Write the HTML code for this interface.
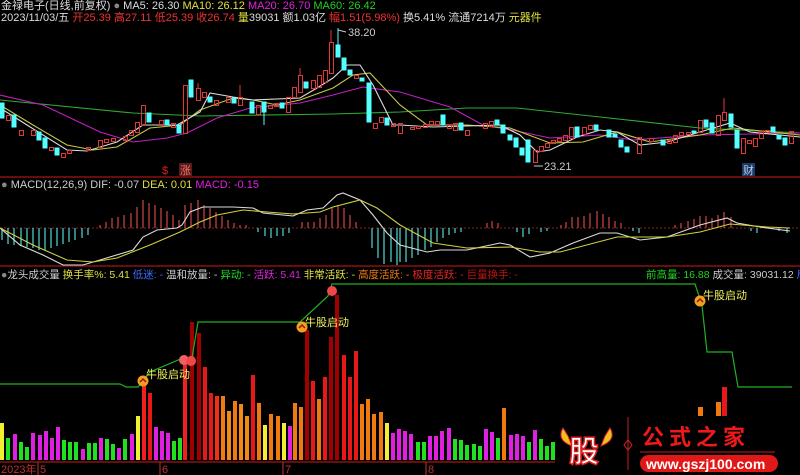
<!DOCTYPE html>
<html><head><meta charset="utf-8"><style>
body{margin:0;background:#000;width:800px;height:475px;overflow:hidden;position:relative;font-family:"Liberation Sans","Noto Sans CJK SC",sans-serif;font-size:11px;}
.t{position:absolute;white-space:nowrap;line-height:12px;}
svg{position:absolute;left:0;top:0}
</style></head><body>
<svg width="800" height="475" viewBox="0 0 800 475">
<line x1="0" y1="177" x2="800" y2="177" stroke="#8a1010" stroke-width="1.5"/>
<line x1="0" y1="266" x2="800" y2="266" stroke="#8a1010" stroke-width="1.5"/>
<line x1="0" y1="462" x2="555" y2="462" stroke="#8a1010" stroke-width="1.5"/>
<line x1="0" y1="228" x2="800" y2="228" stroke="#8a2020" stroke-dasharray="2,2"/>
<g fill="none" stroke-width="1.1">
<polyline stroke="#2faa2f" points="0,100 133,113 200,116 333,114 400,112 467,108 517,108 600,117 700,128 800,133"/>
<polyline stroke="#c020c0" points="0,95 43,105 100,132 133,142 167,138 187,133 217,118 250,108 300,103 333,95 363,87 400,92 450,107 483,125 517,131 550,138 600,135 633,140 700,135 800,133"/>
<polyline stroke="#c8c840" points="0,105 33,125 67,145 93,150 117,147 150,128 180,125 200,110 233,98 253,100 277,105 300,100 333,88 353,75 370,73 400,105 427,125 467,125 510,128 550,143 583,142 617,132 650,142 700,135 733,128 800,135"/>
<polyline stroke="#ddd" points="0,108 27,125 67,150 87,151 117,142 143,125 177,125 200,112 210,93 233,97 253,100 300,98 317,88 333,78 347,65 360,65 373,85 393,125 400,125 433,127 500,125 520,135 537,152 550,150 577,137 600,130 617,132 640,145 667,142 700,132 730,123 750,132 800,137"/>
</g>
<g stroke-width="1">
<g fill="#54ffff" stroke="#54ffff">
<rect x="0" y="103" width="4" height="15"/><rect x="12" y="115" width="4" height="12"/><rect x="37" y="132" width="4" height="8"/><rect x="43" y="138" width="4" height="10"/><rect x="55" y="148" width="4" height="7"/><rect x="147" y="113" width="4" height="9"/><rect x="165" y="120" width="4" height="5"/><rect x="177" y="125" width="4" height="8"/><rect x="189" y="80" width="4" height="17"/><rect x="208" y="97" width="4" height="5"/><rect x="232" y="98" width="4" height="5"/><rect x="250" y="102" width="4" height="11"/><rect x="262" y="102" width="4" height="10"/><line x1="264" y1="112" x2="264" y2="125"/><rect x="280" y="103" width="4" height="5"/><rect x="304" y="82" width="4" height="6"/><rect x="336" y="45" width="4" height="12"/><line x1="338" y1="28" x2="338" y2="45"/><rect x="342" y="58" width="4" height="12"/><rect x="348" y="70" width="4" height="5"/><rect x="360" y="78" width="4" height="3"/><rect x="367" y="83" width="4" height="39"/><rect x="385" y="118" width="4" height="7"/>
<rect x="441" y="115" width="4" height="10"/><rect x="459" y="123" width="4" height="7"/><rect x="495" y="120" width="4" height="5"/><rect x="501" y="125" width="4" height="8"/><rect x="508" y="135" width="4" height="5"/><rect x="514" y="138" width="4" height="9"/><rect x="520" y="148" width="4" height="7"/><rect x="526" y="140" width="4" height="22"/><rect x="575" y="127" width="4" height="10"/><rect x="594" y="125" width="4" height="5"/><rect x="607" y="130" width="4" height="7"/><rect x="613" y="134" width="4" height="3"/><rect x="619" y="140" width="4" height="7"/><rect x="625" y="147" width="4" height="5"/><rect x="661" y="140" width="4" height="5"/><rect x="692" y="131" width="4" height="2"/><rect x="704" y="120" width="4" height="7"/><rect x="710" y="123" width="4" height="10"/><rect x="729" y="114" width="4" height="13"/><rect x="735" y="130" width="4" height="18"/><rect x="771" y="127" width="4" height="5"/><rect x="777" y="135" width="4" height="4"/><rect x="783" y="138" width="4" height="7"/>
</g>
<g fill="none" stroke="#e03838">
<rect x="6.5" y="115.5" width="4" height="5"/><rect x="19.5" y="130.5" width="4" height="5"/><rect x="31.5" y="130.5" width="4" height="5"/><rect x="49.5" y="147.5" width="4" height="3"/><rect x="61.5" y="153.5" width="4" height="4"/><rect x="67.5" y="150.5" width="4" height="3"/><rect x="86.5" y="147.5" width="4" height="3"/><rect x="98.5" y="140.5" width="4" height="7"/><rect x="104.5" y="139.5" width="4" height="3"/><rect x="111.5" y="138.5" width="4" height="3"/><rect x="123.5" y="136.5" width="4" height="4"/><rect x="129.5" y="130.5" width="4" height="5"/><rect x="135.5" y="122.5" width="4" height="10"/><rect x="141.5" y="105.5" width="4" height="20"/><rect x="159.5" y="120.5" width="4" height="5"/><rect x="171.5" y="123.5" width="4" height="4"/><rect x="183.5" y="85.5" width="4" height="48"/><rect x="196.5" y="88.5" width="4" height="12"/><line x1="198" y1="83" x2="198" y2="88"/><rect x="202.5" y="92.5" width="4" height="5"/><rect x="214.5" y="100.5" width="4" height="5"/><rect x="226.5" y="97.5" width="4" height="5"/><rect x="238.5" y="97.5" width="4" height="8"/><line x1="240" y1="85" x2="240" y2="97"/><rect x="256.5" y="105.5" width="4" height="9"/><rect x="268.5" y="105.5" width="4" height="3"/><rect x="274.5" y="103.5" width="4" height="3"/><rect x="286.5" y="97.5" width="4" height="15"/><rect x="292.5" y="87.5" width="4" height="10"/><rect x="298.5" y="75.5" width="4" height="17"/><line x1="300" y1="68" x2="300" y2="75"/><rect x="311.5" y="80.5" width="4" height="8"/><rect x="317.5" y="75.5" width="4" height="12"/><rect x="323.5" y="70.5" width="4" height="12"/><rect x="329.5" y="42.5" width="4" height="31"/><line x1="331" y1="30" x2="331" y2="42"/><rect x="354.5" y="75.5" width="4" height="3"/><rect x="373.5" y="123.5" width="4" height="5"/><rect x="379.5" y="117.5" width="4" height="5"/><rect x="391.5" y="123.5" width="4" height="3"/>
<rect x="398.5" y="123.5" width="4" height="10"/><rect x="410.5" y="127.5" width="4" height="2"/><rect x="416.5" y="126.5" width="4" height="2"/><rect x="423.5" y="124.5" width="4" height="3"/><rect x="429.5" y="121.5" width="4" height="4"/><rect x="435.5" y="121.5" width="4" height="4"/><rect x="447.5" y="125.5" width="4" height="3"/><rect x="453.5" y="123.5" width="4" height="7"/><rect x="465.5" y="130.5" width="4" height="5"/><rect x="483.5" y="123.5" width="4" height="5"/><rect x="489.5" y="121.5" width="4" height="5"/><rect x="533.5" y="150.5" width="4" height="12"/><rect x="539.5" y="146.5" width="4" height="5"/><rect x="545.5" y="143.5" width="4" height="4"/><rect x="551.5" y="140.5" width="4" height="3"/><rect x="557.5" y="138.5" width="4" height="3"/><rect x="563.5" y="135.5" width="4" height="5"/><rect x="569.5" y="127.5" width="4" height="11"/><rect x="582.5" y="127.5" width="4" height="7"/><rect x="588.5" y="125.5" width="4" height="4"/><rect x="637.5" y="137.5" width="4" height="16"/><rect x="649.5" y="138.5" width="4" height="3"/><rect x="667.5" y="140.5" width="4" height="3"/><rect x="673.5" y="135.5" width="4" height="7"/><rect x="679.5" y="132.5" width="4" height="3"/><rect x="686.5" y="132.5" width="4" height="2"/><rect x="698.5" y="120.5" width="4" height="12"/><rect x="716.5" y="115.5" width="4" height="20"/><rect x="722.5" y="112.5" width="4" height="8"/><line x1="724" y1="98" x2="724" y2="112"/><rect x="741.5" y="138.5" width="4" height="15"/><rect x="747.5" y="140.5" width="4" height="3"/><rect x="753.5" y="138.5" width="4" height="8"/><rect x="759.5" y="131.5" width="4" height="7"/><rect x="765.5" y="130.5" width="4" height="2"/><rect x="789.5" y="131.5" width="4" height="12"/>
</g>
</g>
<g font-size="11" fill="#ccc"><text x="348" y="36">38.20</text><line x1="338" y1="30" x2="346" y2="32" stroke="#ccc"/><text x="544" y="170">23.21</text><line x1="534" y1="166" x2="543" y2="166" stroke="#ccc"/></g>
<text x="162" y="174" font-size="11" fill="#e02020">$</text>
<rect x="179" y="163" width="13" height="13" fill="#5a1a1a"/><text x="180" y="174" font-size="11" fill="#f07070">涨</text>
<rect x="742" y="163" width="13" height="13" fill="#1a3a6a"/><text x="743" y="174" font-size="11" fill="#bcd">财</text>
<g stroke-width="1.3">
<g stroke="#4fc8c8">
<line x1="2" y1="228" x2="2" y2="240"/><line x1="8" y1="228" x2="8" y2="244"/><line x1="14" y1="228" x2="14" y2="245"/><line x1="21" y1="228" x2="21" y2="246"/><line x1="27" y1="228" x2="27" y2="247"/><line x1="33" y1="228" x2="33" y2="248"/><line x1="39" y1="228" x2="39" y2="250"/><line x1="45" y1="228" x2="45" y2="250"/><line x1="51" y1="228" x2="51" y2="248"/><line x1="57" y1="228" x2="57" y2="246"/><line x1="63" y1="228" x2="63" y2="244"/><line x1="69" y1="228" x2="69" y2="242"/><line x1="75" y1="228" x2="75" y2="240"/><line x1="82" y1="228" x2="82" y2="238"/><line x1="88" y1="228" x2="88" y2="235"/>
<line x1="258" y1="228" x2="258" y2="232"/><line x1="265" y1="228" x2="265" y2="236"/><line x1="271" y1="228" x2="271" y2="238"/><line x1="277" y1="228" x2="277" y2="236"/><line x1="283" y1="228" x2="283" y2="236"/><line x1="289" y1="228" x2="289" y2="233"/>
<line x1="372" y1="228" x2="372" y2="248"/><line x1="378" y1="228" x2="378" y2="258"/><line x1="384" y1="228" x2="384" y2="264"/><line x1="391" y1="228" x2="391" y2="262"/><line x1="397" y1="228" x2="397" y2="265"/><line x1="400" y1="228" x2="400" y2="262"/><line x1="406" y1="228" x2="406" y2="262"/><line x1="412" y1="228" x2="412" y2="258"/><line x1="418" y1="228" x2="418" y2="255"/><line x1="425" y1="228" x2="425" y2="250"/><line x1="431" y1="228" x2="431" y2="247"/><line x1="437" y1="228" x2="437" y2="242"/><line x1="443" y1="228" x2="443" y2="238"/><line x1="449" y1="228" x2="449" y2="235"/><line x1="455" y1="228" x2="455" y2="233"/><line x1="461" y1="228" x2="461" y2="232"/>
<line x1="517" y1="228" x2="517" y2="232"/><line x1="523" y1="228" x2="523" y2="237"/><line x1="529" y1="228" x2="529" y2="234"/><line x1="541" y1="228" x2="541" y2="232"/><line x1="547" y1="228" x2="547" y2="231"/><line x1="633" y1="228" x2="633" y2="231"/><line x1="639" y1="228" x2="639" y2="233"/><line x1="751" y1="228" x2="751" y2="231"/><line x1="757" y1="228" x2="757" y2="233"/><line x1="779" y1="228" x2="779" y2="231"/><line x1="787" y1="228" x2="787" y2="233"/>
</g>
<g stroke="#c04040">
<line x1="100" y1="228" x2="100" y2="225"/><line x1="106" y1="228" x2="106" y2="222"/><line x1="112" y1="228" x2="112" y2="218"/><line x1="118" y1="228" x2="118" y2="217"/><line x1="124" y1="228" x2="124" y2="215"/><line x1="131" y1="228" x2="131" y2="213"/><line x1="137" y1="228" x2="137" y2="207"/><line x1="143" y1="228" x2="143" y2="200"/><line x1="149" y1="228" x2="149" y2="203"/><line x1="155" y1="228" x2="155" y2="205"/><line x1="161" y1="228" x2="161" y2="208"/><line x1="167" y1="228" x2="167" y2="211"/><line x1="173" y1="228" x2="173" y2="215"/><line x1="179" y1="228" x2="179" y2="220"/><line x1="185" y1="228" x2="185" y2="205"/><line x1="191" y1="228" x2="191" y2="203"/><line x1="198" y1="228" x2="198" y2="200"/><line x1="204" y1="228" x2="204" y2="205"/><line x1="210" y1="228" x2="210" y2="208"/><line x1="216" y1="228" x2="216" y2="212"/><line x1="222" y1="228" x2="222" y2="216"/><line x1="228" y1="228" x2="228" y2="220"/><line x1="234" y1="228" x2="234" y2="223"/><line x1="240" y1="228" x2="240" y2="225"/><line x1="246" y1="228" x2="246" y2="225"/>
<line x1="302" y1="228" x2="302" y2="222"/><line x1="308" y1="228" x2="308" y2="222"/><line x1="314" y1="228" x2="314" y2="222"/><line x1="320" y1="228" x2="320" y2="218"/><line x1="326" y1="228" x2="326" y2="215"/><line x1="332" y1="228" x2="332" y2="208"/><line x1="338" y1="228" x2="338" y2="205"/><line x1="344" y1="228" x2="344" y2="208"/><line x1="350" y1="228" x2="350" y2="215"/><line x1="356" y1="228" x2="356" y2="222"/>
<line x1="487" y1="228" x2="487" y2="223"/><line x1="492" y1="228" x2="492" y2="221"/><line x1="498" y1="228" x2="498" y2="223"/><line x1="561" y1="228" x2="561" y2="225"/><line x1="566" y1="228" x2="566" y2="222"/><line x1="572" y1="228" x2="572" y2="217"/><line x1="578" y1="228" x2="578" y2="217"/><line x1="584" y1="228" x2="584" y2="216"/><line x1="590" y1="228" x2="590" y2="213"/><line x1="597" y1="228" x2="597" y2="211"/><line x1="603" y1="228" x2="603" y2="214"/><line x1="609" y1="228" x2="609" y2="217"/><line x1="615" y1="228" x2="615" y2="221"/><line x1="621" y1="228" x2="621" y2="223"/>
<line x1="675" y1="228" x2="675" y2="225"/><line x1="681" y1="228" x2="681" y2="223"/><line x1="688" y1="228" x2="688" y2="221"/><line x1="694" y1="228" x2="694" y2="219"/><line x1="700" y1="228" x2="700" y2="216"/><line x1="706" y1="228" x2="706" y2="216"/><line x1="712" y1="228" x2="712" y2="218"/><line x1="718" y1="228" x2="718" y2="215"/><line x1="724" y1="228" x2="724" y2="212"/><line x1="731" y1="228" x2="731" y2="217"/>
</g>
</g>
<g fill="none" stroke-width="1.1">
<polyline stroke="#ddd" points="0,228 20,245 43,255 63,265 83,265 100,260 133,250 143,237 157,230 177,228 182,225 190,212 203,207 233,207 253,208 263,213 293,216 307,210 323,208 337,195 343,193 360,200 373,215 387,233 400,245 427,252 440,250 467,250 500,243 510,245 530,257 550,253 573,243 600,233 617,233 640,240 667,237 700,225 727,218 737,223 760,227 790,231"/>
<polyline stroke="#d0d040" points="0,228 33,245 67,260 93,262 117,258 150,245 180,232 200,222 217,215 243,210 267,212 293,214 320,212 333,207 360,200 377,208 400,225 433,243 467,248 510,247 540,252 560,252 617,237 667,237 700,232 730,224 767,227 790,228"/>
</g>
<g>
<rect x="0" y="423" width="4" height="37" fill="#f0f030"/><rect x="6" y="438" width="4" height="22" fill="#20e020"/><rect x="13" y="434" width="4" height="26" fill="#e020e0"/><rect x="19" y="442" width="4" height="18" fill="#20e020"/><rect x="25" y="447" width="4" height="13" fill="#20e020"/><rect x="31" y="433" width="4" height="27" fill="#e020e0"/><rect x="38" y="435" width="4" height="25" fill="#e020e0"/><rect x="44" y="431" width="4" height="29" fill="#e020e0"/><rect x="50" y="438" width="4" height="22" fill="#e020e0"/><rect x="56" y="427" width="4" height="33" fill="#e020e0"/><rect x="62" y="440" width="4" height="20" fill="#20e020"/><rect x="68" y="442" width="4" height="18" fill="#20e020"/><rect x="74" y="442" width="4" height="18" fill="#20e020"/><rect x="81" y="449" width="4" height="11" fill="#e020e0"/><rect x="87" y="443" width="4" height="17" fill="#20e020"/><rect x="93" y="443" width="4" height="17" fill="#20e020"/><rect x="99" y="438" width="4" height="22" fill="#e020e0"/><rect x="105" y="439" width="4" height="21" fill="#20e020"/><rect x="111" y="444" width="4" height="16" fill="#20e020"/><rect x="117" y="448" width="4" height="12" fill="#e020e0"/><rect x="123" y="439" width="4" height="21" fill="#20e020"/><rect x="130" y="434" width="4" height="26" fill="#e020e0"/><rect x="136" y="416" width="4" height="44" fill="#f0f030"/><rect x="142" y="386" width="4" height="74" fill="#f02020"/><rect x="148" y="393" width="4" height="67" fill="#e81818"/><rect x="154" y="427" width="4" height="33" fill="#e020e0"/><rect x="160" y="431" width="4" height="29" fill="#e020e0"/><rect x="166" y="433" width="4" height="27" fill="#e020e0"/><rect x="172" y="441" width="4" height="19" fill="#20e020"/><rect x="178" y="438" width="4" height="22" fill="#20e020"/>
<rect x="183" y="360" width="4" height="100" fill="#f02020"/><rect x="190" y="322" width="4" height="138" fill="#a00000"/><rect x="197" y="333" width="4" height="127" fill="#a00000"/><rect x="203" y="367" width="4" height="93" fill="#e81818"/><rect x="209" y="393" width="4" height="67" fill="#e81818"/><rect x="215" y="396" width="4" height="64" fill="#f03010"/><rect x="221" y="396" width="4" height="64" fill="#f07a10"/><rect x="227" y="411" width="4" height="49" fill="#f08a10"/><rect x="233" y="401" width="4" height="59" fill="#f07a10"/><rect x="239" y="404" width="4" height="56" fill="#f08a10"/><rect x="245" y="416" width="4" height="44" fill="#f08a10"/><rect x="251" y="375" width="4" height="85" fill="#e81818"/><rect x="257" y="403" width="4" height="57" fill="#f07a10"/><rect x="263" y="425" width="4" height="35" fill="#f0f030"/><rect x="269" y="414" width="4" height="46" fill="#f07a10"/><rect x="276" y="416" width="4" height="44" fill="#f07a10"/><rect x="282" y="423" width="4" height="37" fill="#f0f030"/><rect x="288" y="426" width="4" height="34" fill="#e020e0"/><rect x="293" y="403" width="4" height="57" fill="#f07a10"/><rect x="299" y="407" width="4" height="53" fill="#f07a10"/><rect x="305" y="330" width="4" height="130" fill="#a00000"/><rect x="311" y="381" width="4" height="79" fill="#e81818"/><rect x="317" y="399" width="4" height="61" fill="#f07a10"/><rect x="323" y="377" width="4" height="83" fill="#e81818"/><rect x="329" y="337" width="4" height="123" fill="#a00000"/><rect x="335" y="295" width="4" height="165" fill="#a00000"/><rect x="342" y="355" width="4" height="105" fill="#e81818"/><rect x="348" y="377" width="4" height="83" fill="#e81818"/><rect x="354" y="351" width="4" height="109" fill="#e81818"/><rect x="360" y="404" width="4" height="56" fill="#f07a10"/><rect x="366" y="399" width="4" height="61" fill="#f07a10"/><rect x="372" y="414" width="4" height="46" fill="#f07a10"/><rect x="379" y="412" width="4" height="48" fill="#f07a10"/><rect x="385" y="423" width="4" height="37" fill="#f0f030"/><rect x="391" y="433" width="4" height="27" fill="#e020e0"/><rect x="397" y="429" width="4" height="31" fill="#e020e0"/>
<rect x="403" y="431" width="4" height="29" fill="#e020e0"/><rect x="409" y="434" width="4" height="26" fill="#e020e0"/><rect x="416" y="442" width="4" height="18" fill="#20e020"/><rect x="422" y="442" width="4" height="18" fill="#20e020"/><rect x="428" y="436" width="4" height="24" fill="#e020e0"/><rect x="434" y="436" width="4" height="24" fill="#e020e0"/><rect x="440" y="431" width="4" height="29" fill="#e020e0"/><rect x="447" y="428" width="4" height="32" fill="#e020e0"/><rect x="453" y="439" width="4" height="21" fill="#20e020"/><rect x="459" y="440" width="4" height="20" fill="#20e020"/><rect x="465" y="445" width="4" height="15" fill="#20e020"/><rect x="472" y="444" width="4" height="16" fill="#20e020"/><rect x="478" y="446" width="4" height="14" fill="#20e020"/><rect x="484" y="429" width="4" height="31" fill="#e020e0"/><rect x="490" y="432" width="4" height="28" fill="#e020e0"/><rect x="496" y="438" width="4" height="22" fill="#20e020"/><rect x="502" y="408" width="4" height="52" fill="#f07a10"/><rect x="509" y="435" width="4" height="25" fill="#e020e0"/><rect x="515" y="434" width="4" height="26" fill="#e020e0"/><rect x="521" y="436" width="4" height="24" fill="#e020e0"/><rect x="527" y="442" width="4" height="18" fill="#20e020"/><rect x="533" y="430" width="4" height="30" fill="#e020e0"/><rect x="539" y="439" width="4" height="21" fill="#20e020"/><rect x="545" y="446" width="4" height="14" fill="#20e020"/><rect x="551" y="442" width="4" height="18" fill="#20e020"/>
<rect x="698" y="407" width="5" height="10" fill="#f07a10"/><rect x="716" y="402" width="5" height="15" fill="#f07a10"/><rect x="722" y="387" width="5" height="30" fill="#e81818"/>
</g>
<polyline fill="none" stroke="#20b020" stroke-width="1.2" points="0,384 120,384 126,387 138,387 150,372 183,358 192,358 198,322 300,322 328,296 332,284 695,284 702,305 707,352 732,352 738,387 792,387"/>
<g>
<circle cx="143" cy="381" r="5.5" fill="#f0a020"/><path d="M140 382 L143 379 L146 382" stroke="#a01010" fill="none" stroke-width="1.5"/>
<circle cx="302" cy="327" r="5.5" fill="#f0a020"/><path d="M299 328 L302 325 L305 328" stroke="#a01010" fill="none" stroke-width="1.5"/>
<circle cx="700" cy="301" r="5.5" fill="#f0a020"/><path d="M697 302 L700 299 L703 302" stroke="#a01010" fill="none" stroke-width="1.5"/>
<circle cx="184" cy="360" r="5" fill="#f06060"/><circle cx="191" cy="361" r="5" fill="#f04848"/><circle cx="332" cy="291" r="5" fill="#f04848"/>
</g>
<g font-size="11" fill="#f0f060"><text x="146" y="378">牛股启动</text><text x="305" y="326">牛股启动</text><text x="703" y="299">牛股启动</text></g>
<g font-size="11" fill="#c03030"><text x="1" y="473">2023年</text><text x="40" y="473">5</text><text x="162" y="473">6</text><text x="285" y="473">7</text><text x="428" y="473">8</text></g>
<g stroke="#c03030"><line x1="38" y1="462" x2="38" y2="475"/><line x1="160" y1="462" x2="160" y2="475"/><line x1="283" y1="462" x2="283" y2="475"/><line x1="426" y1="462" x2="426" y2="475"/></g>
<rect x="555" y="416" width="245" height="59" fill="#000"/>
<path d="M563 428 Q556 440 572 446 L568 436 Z" fill="#f0c020" stroke="#e02020"/>
<path d="M610 428 Q617 440 601 446 L605 436 Z" fill="#f0c020" stroke="#e02020"/>
<text x="569" y="462" font-size="30" font-weight="bold" fill="#fff" stroke="#e02020" stroke-width="1.5" font-family="Noto Sans CJK SC, sans-serif">股</text>
<line x1="628" y1="417" x2="628" y2="470" stroke="#c02020"/>
<path d="M628 440 L632 445 L628 450 L624 445 Z" fill="none" stroke="#e02020"/>
<text x="642" y="445" font-size="22" font-weight="bold" fill="#f01818" font-family="Noto Sans CJK SC, sans-serif" letter-spacing="5">公式之家</text>
<line x1="640" y1="452" x2="775" y2="452" stroke="#c02020"/>
<rect x="640" y="455" width="138" height="17" rx="8.5" fill="#e01818"/>
<text x="646" y="469" font-size="14" font-weight="bold" fill="#fff">www.gszj100.com</text>
</svg>
<div class="t" style="left:1px;top:0"><span style="color:#ddd">金禄电子(日线,前复权)</span> <span style="color:#888">●</span> <span style="color:#ddd">MA5: 26.30</span> <span style="color:#e0e040">MA10: 26.12</span> <span style="color:#e020e0">MA20: 26.70</span> <span style="color:#20d020">MA60: 26.42</span></div>
<div class="t" style="left:1px;top:12px;color:#ddd">2023/11/03/五 <span style="color:#f03030">开25.39 高27.11 低25.39 收26.74</span> <span style="color:#e0e040">量</span>39031 额1.03亿 <span style="color:#f03030">幅1.51(5.98%)</span> 换5.41% 流通7214万 <span style="color:#e0e040">元器件</span></div>
<div class="t" style="left:1px;top:179px"><span style="color:#888">●</span> <span style="color:#ccc">MACD(12,26,9) DIF: -0.07</span> <span style="color:#e0e040">DEA: 0.01</span> <span style="color:#e020e0">MACD: -0.15</span></div>
<div class="t" style="left:1px;top:269px;font-size:10.5px"><span style="color:#888">●</span><span style="color:#ccc">龙头成交量</span> <span style="color:#e0e040">换手率%: 5.41</span> <span style="color:#3a6aff">低迷: -</span> <span style="color:#ccc">温和放量: -</span> <span style="color:#20e020">异动: -</span> <span style="color:#e020e0">活跃: 5.41</span> <span style="color:#e0e040">非常活跃: -</span> <span style="color:#f07a10">高度活跃: -</span> <span style="color:#f02020">极度活跃: -</span> <span style="color:#c01010">巨量换手: -</span></div>
<div class="t" style="left:646px;top:269px;font-size:10.5px"><span style="color:#20d020">前高量: 16.88</span> <span style="color:#ccc">成交量: 39031.12</span> <span style="color:#3a6aff">局</span></div>
</body></html>
